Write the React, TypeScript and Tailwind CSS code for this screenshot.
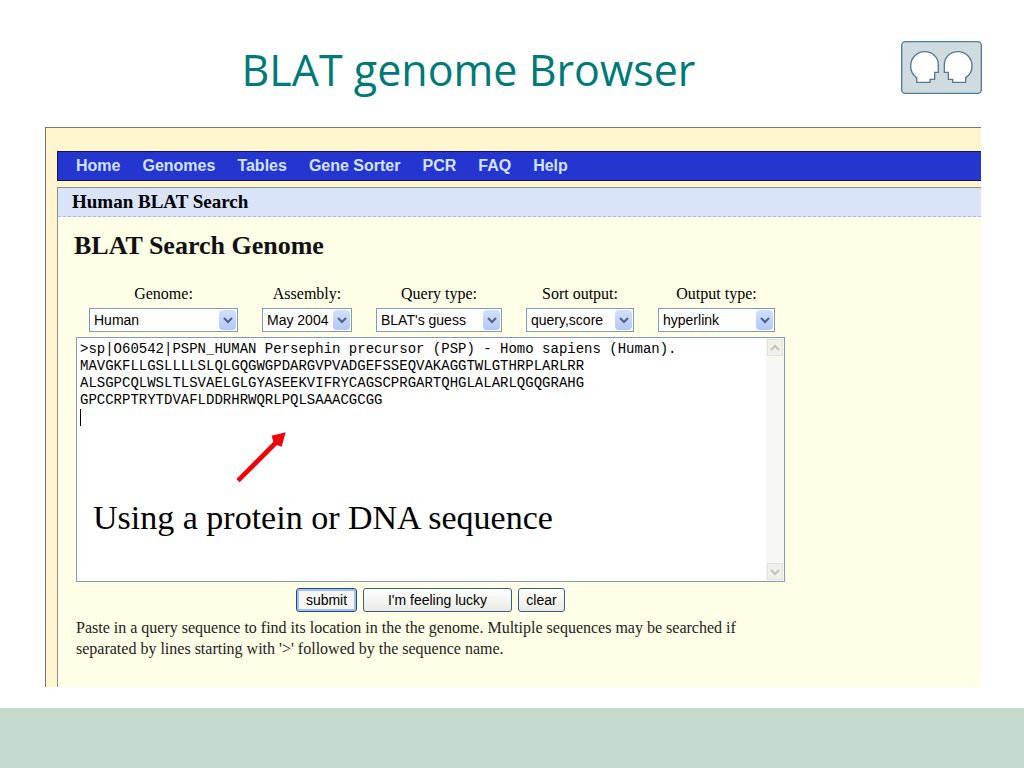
import { useState } from 'react';

const navLinks = ['Home', 'Genomes', 'Tables', 'Gene Sorter', 'PCR', 'FAQ', 'Help'];

const fields = [
    { id: 'genome', label: 'Genome:', value: 'Human', width: 'w-[149px]' },
    { id: 'assembly', label: 'Assembly:', value: 'May 2004', width: 'w-[90px]' },
    { id: 'query-type', label: 'Query type:', value: "BLAT's guess", width: 'w-[126px]' },
    { id: 'sort-output', label: 'Sort output:', value: 'query,score', width: 'w-[108px]' },
    { id: 'output-type', label: 'Output type:', value: 'hyperlink', width: 'w-[117px]' },
];

const sequence = [
    '>sp|O60542|PSPN_HUMAN Persephin precursor (PSP) - Homo sapiens (Human).',
    'MAVGKFLLGSLLLLSLQLGQGWGPDARGVPVADGEFSSEQVAKAGGTWLGTHRPLARLRR',
    'ALSGPCQLWSLTLSVAELGLGYASEEKVIFRYCAGSCPRGARTQHGLALARLQGQGRAHG',
    'GPCCRPTRYTDVAFLDDRHRWQRLPQLSAAACGCGG',
    '',
].join('\n');

function HeadsLogo() {
    return (
        <svg width="81" height="53" viewBox="63 33 243 159" fill="#fff" stroke="#56789a" strokeWidth="4" aria-hidden="true">
            <rect x="65" y="35" width="239" height="155" rx="11" fill="#cedcdf" />
            <path d="M110 157V143C98 135 92 122 92 108C92 83 111 65 134 65C158 65 175 82 175 104V127H164V148H150V157Z" />
            <path d="M257 157V143C270 135 276 122 276 108C276 83 257 65 234 65C210 65 193 82 193 104V127H205V148H218V157Z" />
        </svg>
    );
}

function Chevron({ up = false }: { up?: boolean }) {
    return (
        <svg width="10" height="8" viewBox="0 0 10 8" fill="none" stroke="currentColor" strokeWidth="2" aria-hidden="true">
            <path d={up ? 'M1 6L5 2L9 6' : 'M1 2L5 6L9 2'} />
        </svg>
    );
}

function SelectField({ id, label, value, width }: (typeof fields)[number]) {
    return (
        <div className={`flex flex-col items-center ${width}`}>
            <label htmlFor={id} className="text-base leading-6 whitespace-nowrap">
                {label}
            </label>
            <div className="relative mt-0.5 w-full">
                <select
                    id={id}
                    className="block h-6 w-full appearance-none border border-[#7f9db9] bg-white pl-1 font-['Liberation_Sans',sans-serif] text-sm leading-5"
                >
                    <option>{value}</option>
                </select>
                <span className="pointer-events-none absolute top-0.5 right-0.5 bottom-0.5 flex w-[17px] items-center justify-center rounded-sm bg-gradient-to-b from-[#d3dffb] to-[#b3c8f8] text-[#4d6185]">
                    <Chevron />
                </span>
            </div>
        </div>
    );
}

export default function App() {
    const [query, setQuery] = useState(sequence);

    return (
        <div className="flex min-h-screen flex-col bg-white font-['Liberation_Serif',serif] text-black">
            <header className="flex h-[127px] items-start justify-end pt-[41px] pr-[42px]">
                <h1 className="grow pl-9 text-center font-['Open_Sans',sans-serif] text-[43px] leading-[58px] text-[#007a78]">
                    BLAT genome Browser
                </h1>
                <HeadsLogo />
            </header>

            <main className="mr-[43px] ml-[45px] border-t border-l border-[#77756a] bg-[#fff6d0] pt-[23px] pl-[11px]">
                <nav className="flex h-[30px] items-center gap-[22px] border-y border-l border-[#14164a] bg-[#2435d0] pl-[18px] font-['Liberation_Sans',sans-serif] text-base font-bold text-[#d3e2fb]">
                    {navLinks.map((link) => (
                        <a key={link} href="#" className="whitespace-nowrap">
                            {link}
                        </a>
                    ))}
                </nav>

                <section className="mt-1.5 border-t border-l border-[#8f928c] bg-[#fffee6]">
                    <h2 className="border-b border-dashed border-[#b4bccb] bg-[#d9e4f8] pl-3.5 text-[19px] leading-7 font-bold">
                        Human BLAT Search
                    </h2>

                    <form className="w-[727px] pt-[11px] pb-7 pl-[18px]" onSubmit={(e) => e.preventDefault()}>
                        <h3 className="-ml-0.5 text-[26px] leading-9 font-bold text-[#111]">BLAT Search Genome</h3>

                        <div className="mt-[18px] flex gap-6 pl-[13px]">
                            {fields.map((f) => (
                                <SelectField key={f.id} {...f} />
                            ))}
                        </div>

                        <div className="relative mt-[5px] flex h-[245px] border border-[#7f9db9] bg-white">
                            <textarea
                                aria-label="Query sequence"
                                value={query}
                                onChange={(e) => setQuery(e.target.value)}
                                spellCheck={false}
                                className="grow resize-none overflow-hidden pt-[3px] pl-[3px] font-['Liberation_Mono',monospace] text-sm leading-[17px] whitespace-pre outline-none"
                            />
                            <div className="flex w-[18px] flex-col justify-between bg-[#f7f7f4] p-px text-[#c3c3bb]">
                                <span className="flex h-[17px] items-center justify-center border border-[#e2e2da] bg-[#f0f0ea]">
                                    <Chevron up />
                                </span>
                                <span className="flex h-[17px] items-center justify-center border border-[#e2e2da] bg-[#f0f0ea]">
                                    <Chevron />
                                </span>
                            </div>

                            {/* Text cursor */}
                            <span className="absolute top-[71px] left-[3px] h-[17px] w-px bg-black" />

                            {/* Callout laid over the query box */}
                            <svg className="pointer-events-none absolute top-[90px] left-[156px]" width="56" height="58" viewBox="40 24 168 174" fill="#f0000a" aria-hidden="true">
                                <path d="M50 177L161 65L156 47L198 37L186 80L172 75L60 187Z" />
                            </svg>
                            <p className="pointer-events-none absolute top-[160px] left-4 text-[34px] leading-10 whitespace-nowrap">
                                Using a protein or DNA sequence
                            </p>
                        </div>

                        <div className="mt-1.5 flex justify-center gap-1.5 font-['Liberation_Sans',sans-serif] text-sm">
                            <button
                                type="submit"
                                className="h-6 w-[61px] rounded-[3px] border border-[#1f4a87] bg-[#f6f6f3] inset-ring-2 inset-ring-[#a5bff0]"
                            >
                                submit
                            </button>
                            <button type="submit" className="h-6 w-[149px] rounded-[3px] border border-[#3b5d85] bg-gradient-to-b from-white to-[#e9e9e4]">
                                I'm feeling lucky
                            </button>
                            <button
                                type="button"
                                onClick={() => setQuery('')}
                                className="h-6 w-[47px] rounded-[3px] border border-[#3b5d85] bg-gradient-to-b from-white to-[#e9e9e4]"
                            >
                                clear
                            </button>
                        </div>

                        <p className="mt-[5px] text-base leading-[21px] text-[#222]">
                            Paste in a query sequence to find its location in the the genome. Multiple sequences may be searched if
                            separated by lines starting with '&gt;' followed by the sequence name.
                        </p>
                    </form>
                </section>
            </main>

            <footer className="mt-[21px] grow bg-[#c4dacc]" />
        </div>
    );
}
